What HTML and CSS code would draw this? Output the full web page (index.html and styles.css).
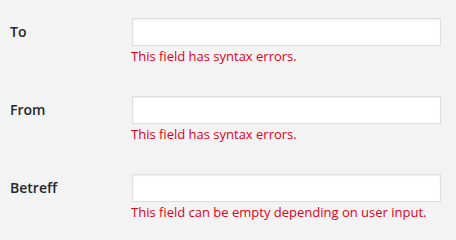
FILE: index.html
```html
<!DOCTYPE html>
<html>
<head>
<meta charset="utf-8">
<link rel="stylesheet" href="styles.css">
</head>
<body>
<div class="form">
  <div class="row">
    <label class="label">To</label>
    <div class="field">
      <input class="input" type="text">
      <p class="error">This field has syntax errors.</p>
    </div>
  </div>
  <div class="row">
    <label class="label">From</label>
    <div class="field">
      <input class="input" type="text">
      <p class="error">This field has syntax errors.</p>
    </div>
  </div>
  <div class="row">
    <label class="label">Betreff</label>
    <div class="field">
      <input class="input" type="text">
      <p class="error">This field can be empty depending on user input.</p>
    </div>
  </div>
</div>
</body>
</html>
```
FILE: styles.css
```css
html, body {
  margin: 0;
  padding: 0;
  background: #f3f3f3;
  font-family: "Open Sans", "Liberation Sans", sans-serif;
}
.form {
  padding: 18px 0 0 10px;
  display: flex;
  flex-direction: column;
  gap: 31px;
}
.row {
  display: grid;
  grid-template-columns: 122px 309px;
  align-items: start;
}
.label {
  font-size: 14px;
  font-weight: 600;
  color: #23282d;
  line-height: 27px;
}
.field {
  display: flex;
  flex-direction: column;
}
.input {
  box-sizing: border-box;
  width: 309px;
  height: 28px;
  margin: 0;
  border: 1px solid #ddd;
  background: #fff;
  box-shadow: inset 0 1px 2px rgba(0,0,0,0.07);
  outline: none;
}
.error {
  margin: 1px 0 0 -1px;
  font-size: 13px;
  line-height: 18px;
  color: #e2001a;
}
```
